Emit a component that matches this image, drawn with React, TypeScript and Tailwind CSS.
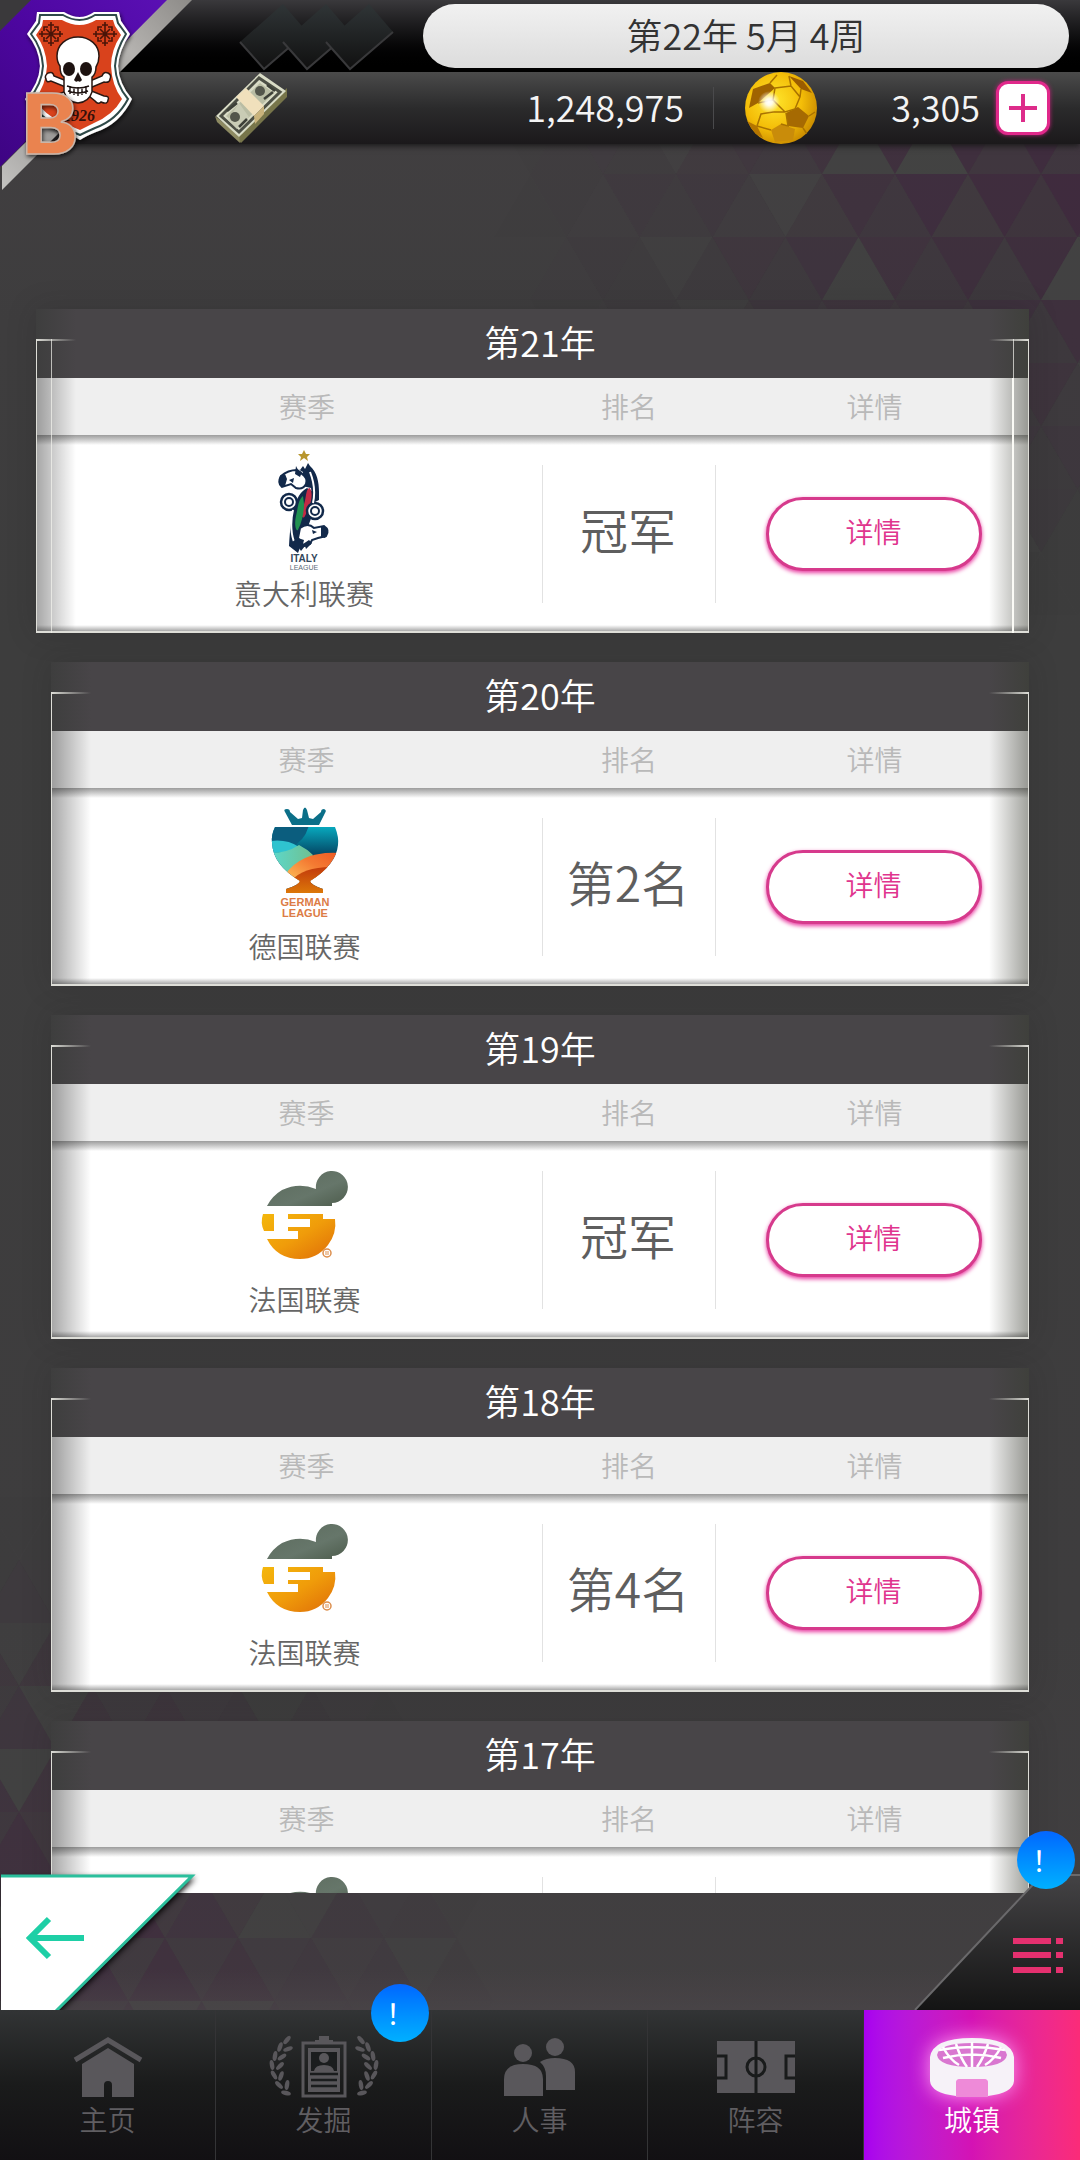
import React from 'react';

type LeagueId = 'italy' | 'german' | 'france';

interface SeasonRecord {
  year: number;
  league: LeagueId;
  rank: string;
}

const leagueNames: Record<LeagueId, string> = {
  italy: '意大利联赛',
  german: '德国联赛',
  france: '法国联赛',
};

const seasons: SeasonRecord[] = [
  { year: 21, league: 'italy', rank: '冠军' },
  { year: 20, league: 'german', rank: '第2名' },
  { year: 19, league: 'france', rank: '冠军' },
  { year: 18, league: 'france', rank: '第4名' },
  { year: 17, league: 'france', rank: '冠军' },
];

/* ---------- background ---------- */

const SIDE = 73;
const ROW = 63;

const buildTriangles = () => {
  const out: { points: string; fill: string; opacity: number }[] = [];
  for (let r = -1; r < 34; r++) {
    const top = 111 + r * ROW;
    for (let c = -3; c < 32; c++) {
      const up = (c + r) % 2 === 0;
      const x = (c * SIDE) / 2 + 19;
      const points = up
        ? `${x},${top + ROW} ${x + SIDE / 2},${top} ${x + SIDE},${top + ROW}`
        : `${x},${top} ${x + SIDE},${top} ${x + SIDE / 2},${top + ROW}`;
      const cx = x + SIDE / 2;
      const cy = top + ROW / 2;
      const fromTop = Math.hypot((1080 - cx) / 560, (cy - 170) / 420);
      const fromBottom = Math.hypot(cx / 480, (cy - 2000) / 480);
      const strength = Math.max(0, 1 - Math.min(fromTop, fromBottom));
      if (strength === 0) continue;
      // the darker purple tiles point down near the top and up near the bottom
      const accent = cy > 1080 ? up : !up;
      const noise = Math.abs(Math.sin(c * 12.9 + r * 78.2) * 43.7) % 1;
      const grey = noise < 0.2;
      out.push({
        points,
        fill: grey ? '#484a48' : '#3e183c',
        opacity: strength * (grey ? 0.5 : (accent ? 0.4 : 0.12) + noise * 0.15),
      });
    }
  }
  return out;
};

const triangles = buildTriangles();

const Backdrop = () => (
  <svg
    className="absolute inset-0 w-full h-full"
    viewBox="0 0 1080 2160"
    preserveAspectRatio="xMidYMid slice"
    aria-hidden="true"
  >
    <defs>
      <linearGradient id="bg" x1="0" y1="0" x2="0" y2="1">
        <stop offset="0" stopColor="#434042" />
        <stop offset="0.15" stopColor="#3e3d3e" />
        <stop offset="0.3" stopColor="#3d3d3d" />
        <stop offset="0.75" stopColor="#3e3d3e" />
        <stop offset="1" stopColor="#434042" />
      </linearGradient>
    </defs>
    <rect width="1080" height="2160" fill="url(#bg)" />
    {triangles.map((t, i) => (
      <polygon key={i} points={t.points} fill={t.fill} opacity={t.opacity} />
    ))}
  </svg>
);

/* ---------- header art ---------- */

const Cross = ({ x, y }: { x: number; y: number }) => (
  <g transform={`translate(${x} ${y})`} stroke="#4a1408" strokeWidth="1.6" fill="none">
    <path d="M0-12V12M-12 0H12M-5-5L5 5M5-5L-5 5" />
    <path d="M-3-9H3M-3 9H3M-9-3V3M9-3V3M-7-3V-7H-3M3-7H7V-3M7 3V7H3M-3 7H-7V3" />
  </g>
);

const ClubCrest = () => (
  <svg className="absolute left-0 top-0 w-[200px] h-[200px]" viewBox="0 0 200 200" role="img" aria-label="俱乐部徽章">
    <defs>
      <linearGradient id="purple" x1="1" y1="0" x2="0" y2="1">
        <stop offset="0" stopColor="#5a10b4" />
        <stop offset="0.5" stopColor="#4d06a0" />
        <stop offset="1" stopColor="#3d0482" />
      </linearGradient>
      <linearGradient id="silver" x1="1" y1="0" x2="0" y2="1">
        <stop offset="0" stopColor="#8d8b88" />
        <stop offset="0.3" stopColor="#b5b3b0" />
        <stop offset="0.6" stopColor="#8b8987" />
        <stop offset="1" stopColor="#c4c3c1" />
      </linearGradient>
      <filter id="crestShadow" x="-20%" y="-20%" width="140%" height="140%">
        <feDropShadow dx="1" dy="2" stdDeviation="2" floodColor="#000" floodOpacity="0.7" />
      </filter>
    </defs>
    <path d="M0 0H168L0 167z" fill="url(#purple)" />
    <path d="M0 0H31L0 31z" fill="#3a393b" />
    <path d="M167 0H192L2 190V166z" fill="url(#silver)" />
    <g filter="url(#crestShadow)">
      <path
        d="M37 12H64Q80 22 94 12H119L121 21L130 34Q119 50 118 66Q119 84 132 99Q120 124 96 132Q86 136 80 140Q72 135 60 131Q36 122 25 99Q39 84 40 66Q39 48 27 34L36 21z"
        fill="#fff"
      />
      <path
        d="M40 15H63Q80 25 95 15H116L118 23L126 34Q116 50 115 66Q116 85 128 99Q117 120 95 128Q86 132 80 135Q71 131 61 127Q40 119 29 99Q42 84 43 66Q42 48 31 34L39 23z"
        fill="none"
        stroke="#2f4a48"
        strokeWidth="2"
      />
      <path
        d="M43 20H62Q80 30 96 20H113L115 26L121 35Q111 50 111 66Q112 86 122 99Q113 115 94 123L80 130L63 123Q44 115 35 99Q46 85 47 66Q46 48 36 35L42 26z"
        fill="#d9431f"
      />
    </g>
    <Cross x={51} y={34} />
    <Cross x={105} y={34} />
    <g stroke="#2a1712" strokeWidth="1.5" fill="#fff">
      <path d="M48 73Q53 71 54 76L104 96Q110 96 108 100Q108 105 101 102Q98 105 95 101L90 97L51 81Q46 83 46 79Q44 76 48 73z" />
      <path d="M108 73Q104 71 102 76L52 97Q47 96 48 101Q50 105 55 102Q58 105 61 100L104 82Q110 83 110 79Q112 75 108 73z" />
      <path d="M78 37C66 37 57 45 57 56Q57 62 60 66Q60 75 64 77V92Q67 102 78 103Q89 102 92 92V77Q96 74 96 67Q99 62 99 56C99 45 90 37 78 37z" />
    </g>
    <ellipse cx="69" cy="69" rx="6" ry="7" fill="#1d1210" />
    <ellipse cx="86" cy="69" rx="6" ry="7" fill="#1d1210" />
    <path d="M78 72L82 80Q80 83 78 81Q76 83 74 80z" fill="#1d1210" />
    <path d="M67 86Q78 90 89 86M68 91Q78 95 88 91M70 86V94M74 87V95M78 87V96M82 87V95M86 86V94" stroke="#1d1210" strokeWidth="1.4" fill="none" />
    <text x="95" y="121" textAnchor="end" className="font-['Liberation_Serif',serif] font-bold italic text-[16px]" fill="#34100a">
      1926
    </text>
    <g filter="url(#crestShadow)">
      <text x="22" y="154" className="font-['Inter','Liberation_Sans',sans-serif] font-extrabold text-[84px]" fill="#ea8350" stroke="#c9b6aa" strokeWidth="1.5">
        B
      </text>
    </g>
  </svg>
);

const Diamonds = () => (
  <svg className="absolute left-[238px] top-0 w-[160px] h-[72px]" viewBox="0 0 160 72" aria-hidden="true">
    <defs>
      <linearGradient id="dia" x1="0" y1="0" x2="0" y2="1">
        <stop offset="0" stopColor="#303537" />
        <stop offset="1" stopColor="#101010" />
      </linearGradient>
    </defs>
    {[0, 43, 86].map((dx) => (
      <g key={dx} transform={`translate(${dx} 0)`}>
        <path d="M45 4L69 32L26 69L2 42z" fill="url(#dia)" />
        <path d="M2 42L26 69L69 32" fill="none" stroke="#39393b" strokeWidth="2" />
      </g>
    ))}
  </svg>
);

const CashIcon = () => (
  <svg className="w-[72px] h-[70px] shrink-0" viewBox="0 0 72 70" aria-hidden="true">
    <path d="M24 62L72 15V24L26 70L22 66z" fill="#77754a" />
    <path d="M0 43L2 49L25 70L24 62z" fill="#8d8a62" />
    <path d="M1 43L45 0L71 18L24 64z" fill="#d9dcc6" />
    <path d="M6 43L44 5L65 19L24 59z" fill="none" stroke="#4c4f45" strokeWidth="3" />
    <path d="M11 43L45 10L59 20L24 54z" fill="#b9bda4" />
    <path d="M13 47L24 30L34 44L22 56z" fill="#c9ccb5" />
    <circle cx="20" cy="44" r="5" fill="#53564b" />
    <circle cx="45" cy="18" r="5" fill="#53564b" />
    <path d="M52 12L60 18M49 26L58 19M12 38L22 30M24 54L32 46" stroke="#3d4038" strokeWidth="2.5" />
    <path d="M21 24L31 15L49 33L39 43z" fill="#f0e0bc" />
    <path d="M39 43L49 33V41L40 51z" fill="#c9b37c" />
  </svg>
);

const GoldBall = () => (
  <svg className="w-[72px] h-[72px] shrink-0" viewBox="0 0 72 72" aria-hidden="true">
    <defs>
      <radialGradient id="gold" cx="0.4" cy="0.4" r="0.65">
        <stop offset="0" stopColor="#ffe62c" />
        <stop offset="0.6" stopColor="#f4bd08" />
        <stop offset="1" stopColor="#c88a00" />
      </radialGradient>
      <radialGradient id="shine">
        <stop offset="0" stopColor="#fff" />
        <stop offset="0.3" stopColor="#fff" stopOpacity="0.9" />
        <stop offset="1" stopColor="#fff" stopOpacity="0" />
      </radialGradient>
      <clipPath id="ballClip">
        <circle cx="36" cy="36" r="36" />
      </clipPath>
    </defs>
    <g clipPath="url(#ballClip)">
      <rect width="72" height="72" fill="url(#gold)" />
      <path d="M8 17L25 11L30 16L13 31L4 36z" fill="#a06300" />
      <path d="M44 4L58 9L67 21L56 17z" fill="#9a5c00" />
      <path d="M41 41L53 35L64 44L58 56L43 54z" fill="#a66a02" />
      <path d="M0 48L12 54L18 66L6 60z" fill="#b57500" />
      <path d="M26 58L36 52L50 57L48 68L30 70z" fill="#c98c0a" />
      <path
        d="M30 16L46 14L55 25L50 37L40 40L28 28zM28 28L13 31M12 54L16 42L28 40L40 40M12 54L26 58M41 41L43 54L36 52M56 17L55 25M64 44L70 40M58 56L62 62M46 14L44 4M25 11L32 3"
        fill="none"
        stroke="#a97200"
        strokeWidth="1.5"
      />
    </g>
    <circle cx="24" cy="30" r="11" fill="url(#shine)" />
  </svg>
);

/* ---------- league logos ---------- */

const ItalyLogo = () => (
  <svg className="w-[56px] h-[120px] overflow-visible" viewBox="0 0 56 120" aria-hidden="true">
    <path d="M28 0L30 4H34L31 7L32 11L28 8L24 11L25 7L22 4H26z" fill="#b8962e" />
    <path d="M27 16L29 19L32 13L34 16C41 22 43 32 43 42V50L37 53L35 38L26 36L22 30L27 22L20 18L24 20z" fill="#12294a" />
    <path d="M5 26Q12 20 21 20L26 24Q32 28 30 34Q27 40 20 38L15 34L6 37Q1 33 5 26z" fill="#fff" stroke="#12294a" strokeWidth="2" />
    <path d="M4 26L9 24L11 29L9 36L6 37Q1 33 4 26zM13 30L18 28L17 33zM20 16L22 20L26 22L24 27L19 24z" fill="#12294a" />
    <path d="M31 38C20 44 15 60 13 96L22 103L30 82C36 66 40 58 37 42z" fill="#12294a" />
    <path d="M34 38C29 38 31 50 26 60C24 66 27 70 29 66C34 56 38 46 34 38z" fill="#c32b45" />
    <path d="M27 46C22 50 22 58 20 66C18 74 20 82 22 80C26 72 28 62 28 54z" fill="#219150" />
    <circle cx="13" cy="52" r="8" fill="#fff" stroke="#12294a" strokeWidth="2.5" />
    <circle cx="13" cy="52" r="4" fill="#fff" stroke="#12294a" strokeWidth="2" />
    <circle cx="39" cy="61" r="8" fill="#fff" stroke="#12294a" strokeWidth="2.5" />
    <circle cx="39" cy="61" r="4" fill="#fff" stroke="#12294a" strokeWidth="2" />
    <path d="M17 60C14 72 15 86 19 94M37 53C39 44 38 32 34 22" fill="none" stroke="#fff" strokeWidth="2" />
    <path d="M24 78Q32 72 38 78L48 76Q54 80 50 86L42 88L36 90L34 94L28 96L22 88z" fill="#fff" stroke="#12294a" strokeWidth="2" />
    <path d="M45 77L50 77Q54 82 49 88L45 87zM36 80L41 82L37 84zM22 88L28 90L27 94L33 90L36 93L30 99L29 96L25 101L23 98L20 101L16 92z" fill="#12294a" />
    <text x="28" y="112" textAnchor="middle" className="font-['Liberation_Sans',sans-serif] font-bold text-[10px]" fill="#33475b">
      ITALY
    </text>
    <text x="28" y="120" textAnchor="middle" className="font-['Liberation_Sans',sans-serif] text-[7px]" fill="#5c6b78">
      LEAGUE
    </text>
  </svg>
);

const GermanLogo = () => (
  <svg className="w-[68px] h-[112px] overflow-visible" viewBox="0 0 68 112" aria-hidden="true">
    <defs>
      <clipPath id="cup">
        <path d="M4 20H64Q68 30 67 38Q65 58 39 74Q40 78 52 82V86H15V82Q28 78 29 74Q2 58 1 36Q0 28 4 20z" />
      </clipPath>
      <linearGradient id="cupTeal" x1="0" y1="0.15" x2="0" y2="0.45">
        <stop offset="0" stopColor="#08b4c8" />
        <stop offset="1" stopColor="#04405f" />
      </linearGradient>
      <linearGradient id="cupMint" x1="0" y1="0" x2="1" y2="0">
        <stop offset="0" stopColor="#5cd8cc" />
        <stop offset="1" stopColor="#6fc090" />
      </linearGradient>
      <linearGradient id="cupOrange" x1="0" y1="1" x2="1" y2="0">
        <stop offset="0" stopColor="#ffcf62" />
        <stop offset="0.6" stopColor="#f47a32" />
        <stop offset="1" stopColor="#ee5a24" />
      </linearGradient>
      <linearGradient id="cupBase" x1="0" y1="0" x2="0" y2="1">
        <stop offset="0" stopColor="#c23a0c" />
        <stop offset="1" stopColor="#e08108" />
      </linearGradient>
    </defs>
    <path d="M14 5Q12 2 16 2Q19 2 19 5L27 12L31 11L32 3Q34-2 36 3L38 11L42 12L50 5Q50 2 53 2Q56 3 54 6L48 18H21z" fill="#0b6f88" />
    <g clipPath="url(#cup)">
      <rect width="68" height="110" fill="url(#cupTeal)" />
      <path d="M0 18H38Q34 34 20 40L0 36z" fill="#0b5d7e" />
      <path d="M0 34Q16 32 28 40Q20 46 0 46z" fill="#2fc3cf" />
      <path d="M0 46Q16 46 28 38Q36 42 42 48L34 62L14 66H0z" fill="url(#cupMint)" />
      <path d="M14 68Q30 44 68 46V62L30 80z" fill="url(#cupOrange)" />
      <path d="M20 74Q32 60 60 60L68 90H10z" fill="url(#cupBase)" />
    </g>
    <text x="34" y="99" textAnchor="middle" className="font-['Liberation_Sans',sans-serif] font-bold text-[11px]" fill="#dc7c46">
      GERMAN
    </text>
    <text x="34" y="110" textAnchor="middle" className="font-['Liberation_Sans',sans-serif] font-bold text-[11px]" fill="#dc7c46">
      LEAGUE
    </text>
  </svg>
);

const FranceLogo = () => (
  <svg className="w-[90px] h-[90px]" viewBox="0 0 90 90" aria-hidden="true">
    <defs>
      <linearGradient id="frGreen" x1="0" y1="0" x2="1" y2="1">
        <stop offset="0" stopColor="#5b6a5c" />
        <stop offset="0.6" stopColor="#66766a" />
        <stop offset="1" stopColor="#4d5c4c" />
      </linearGradient>
      <linearGradient id="frOrange" x1="0" y1="0" x2="1" y2="1">
        <stop offset="0" stopColor="#f4b70c" />
        <stop offset="0.5" stopColor="#f09c0a" />
        <stop offset="1" stopColor="#de6c08" />
      </linearGradient>
    </defs>
    <path d="M7 35Q12 25 22 19Q39 11 56 18A16 16 0 1 1 72 32V35z" fill="url(#frGreen)" />
    <path
      d="M3 43H14V60H4Q0 52 3 43zM28 43H63V48H75Q77 62 68 74Q57 88 40 88Q17 88 7 68H38V60H28V56H50V48H28z"
      fill="url(#frOrange)"
    />
    <circle cx="67" cy="82" r="4" fill="none" stroke="#dc8e4c" strokeWidth="1.5" />
    <path d="M66 80V84M68 80V84" stroke="#dc8e4c" strokeWidth="1" />
  </svg>
);

const LeagueLogo = ({ league }: { league: LeagueId }) => {
  if (league === 'italy') return <ItalyLogo />;
  if (league === 'german') return <GermanLogo />;
  return <FranceLogo />;
};

/* ---------- nav icons ---------- */

const HomeIcon = () => (
  <svg className="w-[70px] h-[60px]" viewBox="0 0 70 60" fill="#59575b" aria-hidden="true">
    <path d="M2 23L35 3L68 23" fill="none" stroke="#59575b" strokeWidth="5" />
    <path d="M35 11L61 27V60H39V48Q39 44 35 44Q31 44 31 48V60H9V27z" />
  </svg>
);

const leaves = [
  [20, 5, -50], [13, 12, -70], [8, 21, -80], [5, 30, -100], [7, 40, -120], [12, 50, -135],
  [21, 14, -20], [15, 22, -35], [13, 31, -45], [14, 41, -70], [20, 50, -80], [19, 58, -165],
];

const Laurel = () => (
  <>
    {leaves.map(([x, y, a]) => (
      <ellipse key={`${x}-${y}`} cx={x - 1} cy={y} rx="5" ry="2.2" transform={`rotate(${a} ${x - 1} ${y})`} />
    ))}
  </>
);

const ScoutIcon = () => (
  <svg className="w-[112px] h-[64px]" viewBox="0 0 112 64" fill="#59575b" aria-hidden="true">
    <Laurel />
    <g transform="translate(112 0) scale(-1 1)">
      <Laurel />
    </g>
    <rect x="35" y="8" width="42" height="53" fill="none" stroke="#59575b" strokeWidth="3" />
    <path d="M51 1H61V5H65V9H47V5H51z" />
    <rect x="40" y="13" width="32" height="44" />
    <path d="M43 17H69V36H43z" fill="#1b1d1e" />
    <circle cx="56" cy="23" r="5" />
    <path d="M46 36Q47 30 56 30Q65 30 66 36z" />
    <path d="M42 39H70M43 45H69M43 51H69" stroke="#1b1d1e" strokeWidth="2.5" />
  </svg>
);

const PeopleIcon = () => (
  <svg className="w-[72px] h-[58px]" viewBox="0 0 72 58" fill="#59575b" aria-hidden="true">
    <circle cx="51" cy="9" r="9" />
    <path d="M36 24Q42 20 51 20Q71 20 71 34V52H42V38Q42 29 36 24z" />
    <circle cx="19" cy="15" r="9" />
    <path d="M0 58V41Q0 26 19 26Q39 26 39 41V58z" />
  </svg>
);

const PitchIcon = () => (
  <svg className="w-[78px] h-[52px]" viewBox="0 0 78 52" aria-hidden="true">
    <rect width="78" height="52" fill="#59575b" />
    <path d="M39 0V52M0 15H9V37H0M78 15H69V37H78" fill="none" stroke="#191b1b" strokeWidth="3" />
    <circle cx="39" cy="26" r="9" fill="none" stroke="#191b1b" strokeWidth="3" />
  </svg>
);

const StadiumIcon = () => (
  <svg className="w-[86px] h-[60px] drop-shadow-[0_0_10px_#ff9cf4]" viewBox="0 0 86 60" aria-hidden="true">
    <path d="M1 20Q4 1 43 1Q82 1 85 20V44Q84 56 59 59V46Q59 42 55 42H31Q27 42 27 46V59Q2 56 1 44z" fill="#f6f2f8" />
    <path d="M8 18Q10 6 43 6Q76 6 78 18Q76 30 43 30Q10 30 8 18z" fill="#d977d0" />
    <path d="M43 5V30M27 7Q32 22 38 30M59 7Q54 22 48 30M14 10Q20 22 30 28M72 10Q66 22 56 28M10 13Q43 7 76 13M14 21Q43 14 72 21" fill="none" stroke="#fff" strokeWidth="2.5" />
    <path d="M27 60V46Q27 42 31 42H55Q59 42 59 46V60z" fill="#ee8ad8" />
  </svg>
);

/* ---------- pieces ---------- */

const AlertBadge = ({ className }: { className: string }) => (
  <span
    className={`absolute z-20 flex items-center justify-center w-[58px] h-[58px] rounded-full bg-linear-to-b from-[#0766ff] to-[#00b0ff] text-white text-[28px] leading-none font-normal ${className}`}
  >
    ！
  </span>
);

const Header = () => (
  <header className="relative z-10 shrink-0">
    <div className="relative flex justify-end h-[72px] pt-1 pr-[11px] bg-linear-to-b from-[#3a393c] to-black">
      <Diamonds />
      <div className="flex items-center justify-center w-[646px] h-[64px] pb-1 rounded-full bg-linear-to-b from-[#f1f1f1] to-[#dcdcdc] text-[36px] leading-none text-[#333]">
        第22年 5月 4周
      </div>
    </div>
    <div className="flex items-center h-[72px] pl-[215px] pr-[30px] bg-linear-to-b from-[#4b4b4b] via-[#2b2b2c] to-[#1b191b] text-[36px] leading-none text-[#f4f4f4] shadow-[0_2px_6px_#1a1a1a]">
      <CashIcon />
      <span className="flex-1 pb-1 text-right">1,248,975</span>
      <span className="w-px h-[42px] ml-[29px] mr-[31px] bg-[#4a4a4c]" />
      <GoldBall />
      <span className="w-[163px] pb-1 text-right">3,305</span>
      <button
        type="button"
        aria-label="购买"
        className="flex items-center justify-center w-[54px] h-[54px] ml-4 rounded-xl border-3 border-[#e0288a] bg-white shadow-[0_0_4px_#c0207a]"
      >
        <svg className="w-7 h-7" viewBox="0 0 28 28" aria-hidden="true">
          <path d="M14 0V28M0 14H28" stroke="#dd2c8a" strokeWidth="4" />
        </svg>
      </button>
    </div>
    <ClubCrest />
  </header>
);

const CardFrame = ({ selected }: { selected: boolean }) => (
  <div className="absolute inset-0 pointer-events-none" aria-hidden="true">
    <div className="absolute left-0 top-[69px] bottom-0 w-10 bg-linear-to-r from-black/35 to-transparent" />
    <div className="absolute right-0 top-[69px] bottom-0 w-10 bg-linear-to-l from-[#2a2c20]/45 to-transparent" />
    <div className="absolute left-0 top-0 w-10 h-[69px] bg-linear-to-r from-[#3e3e3e] to-transparent" />
    <div className="absolute right-0 top-0 w-10 h-[69px] bg-linear-to-l from-[#3f403c] to-transparent" />
    <div className="absolute inset-x-0 bottom-0 h-2 bg-linear-to-t from-black/45 to-transparent" />
    <div className="absolute inset-x-0 top-[30px] bottom-0 border-x border-b-2 border-[#deded8]" />
    <div className="absolute left-0 top-[30px] w-10 h-0.5 bg-linear-to-r from-[#deded8] to-transparent" />
    <div className="absolute right-0 top-[30px] w-10 h-0.5 bg-linear-to-l from-[#deded8] to-transparent" />
    {selected && <div className="absolute inset-x-[15px] top-[30px] bottom-0 border-x border-[#f4f4ee]/70" />}
    {selected && <div className="absolute right-[15px] top-[69px] bottom-0 w-0.5 bg-[#fbfbf6]" />}
  </div>
);

const SeasonCard = ({ record, selected }: { record: SeasonRecord; selected: boolean }) => (
  <article
    className={`relative shadow-[0_0_28px_rgba(30,30,30,0.2)] ${selected ? '-ml-[15px]' : ''}`}
  >
    <h2 className={`flex items-center justify-center h-[69px] pb-1.5 bg-[#484548] text-[36px] leading-none text-white ${selected ? 'pl-[15px]' : ''}`}>
      第{record.year}年
    </h2>
    <table className="w-full table-fixed border-collapse">
      <colgroup>
        <col />
        <col className="w-[174px]" />
        <col className="w-[313px]" />
      </colgroup>
      <thead>
        <tr className="h-[57px] bg-[#efefef] text-[28px] leading-none text-[#b9b9b9]">
          <th scope="col" className={`pb-0.5 font-[350] ${selected ? 'pl-9' : 'pl-5'}`}>赛季</th>
          <th scope="col" className="pb-0.5 font-[350]">排名</th>
          <th scope="col" className="pl-1 pb-0.5 font-[350]">详情</th>
        </tr>
      </thead>
      <tbody>
        <tr className="h-[198px] bg-white bg-linear-to-b from-[#9c9c9c] to-white to-[10px]">
          <td className={`pb-2 ${selected ? 'pl-[30px]' : 'pl-4'}`}>
            <div className="flex flex-col items-center">
              <div className="flex items-center h-[126px]">
                <LeagueLogo league={record.league} />
              </div>
              <span className="text-[28px] leading-10 text-[#666]">{leagueNames[record.league]}</span>
            </div>
          </td>
          <td>
            <div className="flex items-center justify-center h-[138px] pr-0.5 pb-3 border-x border-[#e2e2e2] text-[48px] leading-none text-[#5e5e5e]">
              {record.rank}
            </div>
          </td>
          <td className="pl-0.5 text-center">
            <button
              type="button"
              className="w-[216px] h-[74px] pb-1.5 rounded-full border-3 border-[#d63a8c] bg-white text-[28px] leading-none text-[#e0358e] shadow-[0_2px_4px_#e83aa0]"
            >
              详情
            </button>
          </td>
        </tr>
      </tbody>
    </table>
    <CardFrame selected={selected} />
  </article>
);

const ActionBar = () => (
  <div className="relative shrink-0 h-[117px]">
    <div className="absolute inset-x-0 bottom-0 h-10 bg-linear-to-t from-[#4c464a]/60 to-transparent" />
    <button type="button" aria-label="返回" className="absolute left-0 bottom-0 z-10 w-[200px] h-[140px]">
      <svg className="w-full h-full" viewBox="0 0 200 140" aria-hidden="true">
        <path d="M1 5H193L56 140H1z" fill="#fff" className="drop-shadow-[2px_3px_3px_#000]" />
        <path d="M1 6H192L56 141" fill="none" stroke="#2bbf9c" strokeWidth="3" />
        <path d="M84 68H30M49 49L30 68L49 87" fill="none" stroke="#1ecfa6" strokeWidth="6" />
      </svg>
    </button>
    <button type="button" aria-label="菜单" className="absolute right-0 bottom-0 z-10 w-[166px] h-[136px]">
      <svg className="w-full h-full" viewBox="0 0 166 136" aria-hidden="true">
        <defs>
          <linearGradient id="menuBg" x1="0" y1="0" x2="0" y2="1">
            <stop offset="0" stopColor="#444345" />
            <stop offset="1" stopColor="#141414" />
          </linearGradient>
        </defs>
        <path d="M128 1H166V136H1z" fill="url(#menuBg)" />
        <path d="M166 1H128L1 136" fill="none" stroke="#6a696b" strokeWidth="2" />
        <path d="M99 67H137M142 67H149M99 81H137M142 81H149M99 96H137M142 96H149" stroke="#e5306f" strokeWidth="6" />
      </svg>
    </button>
    <AlertBadge className="right-[5px] bottom-[121px]" />
  </div>
);

const navItems = [
  { label: '主页', icon: <HomeIcon />, alert: false },
  { label: '发掘', icon: <ScoutIcon />, alert: true },
  { label: '人事', icon: <PeopleIcon />, alert: false },
  { label: '阵容', icon: <PitchIcon />, alert: false },
  { label: '城镇', icon: <StadiumIcon />, alert: false },
];

const BottomNav = () => (
  <nav className="relative z-10 shrink-0 grid grid-cols-5 h-[150px] bg-linear-to-b from-[#323435] via-[#1a1b1b] to-[#121013]">
    {navItems.map((item, i) => {
      const active = i === navItems.length - 1;
      return (
        <button
          key={item.label}
          type="button"
          aria-current={active ? 'page' : undefined}
          className={`relative flex flex-col items-center pt-6 text-[28px] leading-[38px] ${
            active
              ? 'bg-linear-to-r from-[#a800f0] via-[#d412b4] to-[#fb2b78] text-white'
              : 'border-r border-[#343436] text-[#605e62]'
          }`}
        >
          <span className="flex items-center justify-center h-[66px]">{item.icon}</span>
          {item.label}
          {item.alert && <AlertBadge className="right-[2px] -top-[26px]" />}
        </button>
      );
    })}
  </nav>
);

export default function App() {
  return (
    <div className="relative flex flex-col h-screen overflow-hidden bg-[#3c3b3c] font-['Noto_Sans_CJK_SC','Noto_Sans',sans-serif] font-[350]">
      <Backdrop />
      <Header />
      <main className="relative flex-1 min-h-0 overflow-y-auto pt-[165px] px-[51px] [scrollbar-width:none]">
        <div className="flex flex-col gap-[29px]">
          {seasons.map((record, i) => (
            <SeasonCard key={record.year} record={record} selected={i === 0} />
          ))}
        </div>
      </main>
      <ActionBar />
      <BottomNav />
    </div>
  );
}
